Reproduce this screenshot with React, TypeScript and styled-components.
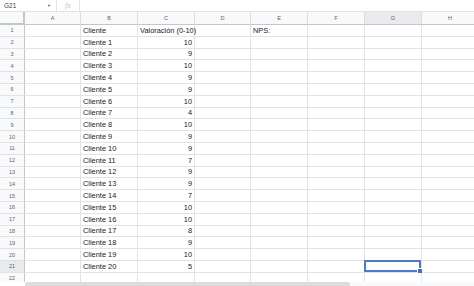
import React from "react";
import styled, { createGlobalStyle } from "styled-components";

const Global = createGlobalStyle`
  html, body { margin: 0; padding: 0; background: #fff; }
  body { font-family: "Liberation Sans", Arial, sans-serif; overflow: hidden; }
`;

const Page = styled.div`
  width: 474px;
  height: 286px;
  display: flex;
  flex-direction: column;
  overflow: hidden;
  background: #fff;
`;

const FormulaBar = styled.div`
  height: 12px;
  flex: none;
  display: flex;
  align-items: center;
  border-bottom: 1px solid #e3e3e3;
  box-sizing: border-box;
  font-size: 6.5px;
  color: #3c4043;
`;

const NameBox = styled.div`
  width: 57px;
  height: 100%;
  box-sizing: border-box;
  display: flex;
  align-items: center;
  justify-content: space-between;
  padding: 0 5px 0 4px;
  border-right: 1px solid #e3e3e3;
`;

const Caret = styled.span`
  font-size: 4px;
  color: #5f6368;
`;

const Fx = styled.div`
  width: 23px;
  height: 100%;
  box-sizing: border-box;
  display: flex;
  align-items: center;
  justify-content: center;
  border-right: 1px solid #e3e3e3;
  font-family: "Liberation Serif", serif;
  font-style: italic;
  font-size: 8px;
  color: #c4c7c5;
`;

const Sheet = styled.div`
  flex: 1;
  overflow: hidden;
  display: grid;
  grid-template-columns: 25px 56px 57px 57px 56px 57px 57px 57px 57px;
  grid-template-rows: 13px repeat(22, 11.8px);
`;

const Corner = styled.div`
  background: #f8f9fa;
  border-right: 2px solid #c4c7c5;
  border-bottom: 2px solid #c4c7c5;
  box-sizing: border-box;
`;

const ColHead = styled.div<{ $active?: boolean }>`
  background: ${(p) => (p.$active ? "#e8eaed" : "#f8f9fa")};
  border-right: 1px solid #dcdcdc;
  border-bottom: 1px solid #c4c7c5;
  box-sizing: border-box;
  display: flex;
  align-items: center;
  justify-content: center;
  font-size: 5.5px;
  color: #5f6368;
`;

const RowHead = styled.div<{ $active?: boolean }>`
  background: ${(p) => (p.$active ? "#e8eaed" : "#f8f9fa")};
  border-right: 1px solid #c4c7c5;
  border-bottom: 1px solid #e2e2e2;
  box-sizing: border-box;
  display: flex;
  align-items: center;
  justify-content: center;
  font-size: 5.5px;
  color: #5f6368;
`;

const Cell = styled.div<{ $num?: boolean }>`
  border-right: 1px solid #e2e3e3;
  border-bottom: 1px solid #e2e3e3;
  box-sizing: border-box;
  display: flex;
  align-items: center;
  justify-content: ${(p) => (p.$num ? "flex-end" : "flex-start")};
  padding: 0 2px 0 2px;
  font-size: 7.4px;
  color: #202124;
  white-space: nowrap;
  overflow: visible;
  position: relative;
`;

const Selection = styled.div`
  position: absolute;
  left: -1px;
  top: -1px;
  right: 0;
  bottom: 0;
  border: 2px solid #4a7bc4;
  pointer-events: none;
`;

const Handle = styled.div`
  position: absolute;
  right: -4px;
  bottom: -4px;
  width: 4px;
  height: 4px;
  background: #3b6fc0;
  border: 1px solid #fff;
`;

const ScrollTrack = styled.div`
  height: 4px;
  flex: none;
  display: flex;
  padding-left: 25px;
  background: #fff;
`;

const ScrollThumb = styled.div`
  width: 325px;
  height: 4px;
  background: #dadce0;
  border-radius: 2px 2px 0 0;
`;

const ScrollRest = styled.div`
  flex: 1;
  background: #f8f9fa;
`;

const cols = ["A", "B", "C", "D", "E", "F", "G", "H"];
const values = [10, 9, 10, 9, 9, 10, 4, 10, 9, 9, 7, 9, 9, 7, 10, 10, 8, 9, 10, 5];

type Row = string[];

function buildRows(): Row[] {
  const rows: Row[] = [];
  rows.push(["", "Cliente", "Valoración (0-10)", "", "NPS:", "", "", ""]);
  values.forEach((v, i) => {
    rows.push(["", `Cliente ${i + 1}`, String(v), "", "", "", "", ""]);
  });
  rows.push(["", "", "", "", "", "", "", ""]);
  return rows;
}

export default function App() {
  const rows = buildRows();
  return (
    <Page>
      <Global />
      <FormulaBar>
        <NameBox>
          <span>G21</span>
          <Caret>▼</Caret>
        </NameBox>
        <Fx>fx</Fx>
      </FormulaBar>
      <Sheet>
        <Corner />
        {cols.map((c) => (
          <ColHead key={c} $active={c === "G"}>
            {c}
          </ColHead>
        ))}
        {rows.map((r, ri) => (
          <React.Fragment key={ri}>
            <RowHead $active={ri + 1 === 21}>{ri + 1}</RowHead>
            {r.map((v, ci) => {
              const isNum = ci === 2 && ri > 0;
              const selected = ri + 1 === 21 && ci === 6;
              return (
                <Cell key={ci} $num={isNum}>
                  {v}
                  {selected && (
                    <Selection>
                      <Handle />
                    </Selection>
                  )}
                </Cell>
              );
            })}
          </React.Fragment>
        ))}
      </Sheet>
      <ScrollTrack>
        <ScrollThumb />
        <ScrollRest />
      </ScrollTrack>
    </Page>
  );
}
